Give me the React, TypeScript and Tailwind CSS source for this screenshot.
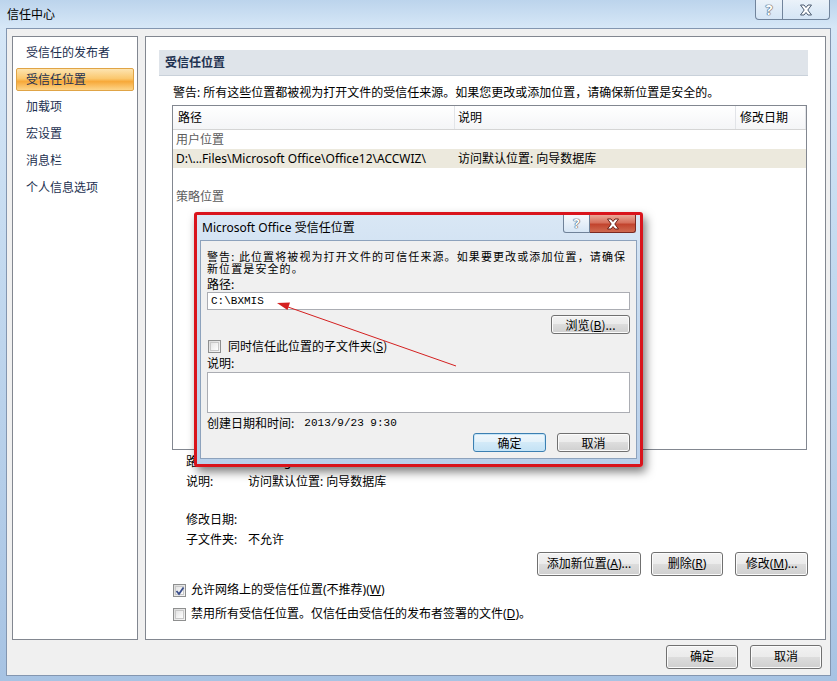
import React from 'react';

const Btn = ({
  children,
  w,
  h = 'h-[24px]',
  focused = false,
}: {
  children: React.ReactNode;
  w: string;
  h?: string;
  focused?: boolean;
}) => (
  <button
    className={`${w} ${h} flex items-center justify-center rounded-[3px] border text-[12px] leading-none text-black ${
      focused
        ? 'border-[#3c7fb1] shadow-[inset_0_0_0_1px_#c5e5f8] bg-[linear-gradient(180deg,#f0f7fc_0%,#e3f1fa_50%,#d3eaf8_50%,#c4e2f5_100%)]'
        : 'border-[#707070] shadow-[inset_0_0_0_1px_#fbfbfb] bg-[linear-gradient(180deg,#f2f2f2_0%,#ebebeb_50%,#dddddd_50%,#cfcfcf_100%)]'
    }`}
  >
    {children}
  </button>
);

const Check = ({ checked = false }: { checked?: boolean }) => (
  <span className="relative flex h-[13px] w-[13px] shrink-0 items-center justify-center border border-[#8e8f8f] bg-[linear-gradient(135deg,#dcdcdc,#f6f6f6)]">
    <span className="h-[9px] w-[9px] border border-[#c8c8c8] bg-[linear-gradient(135deg,#e4e4e4,#ffffff)]" />
    {checked && (
      <svg className="absolute left-[1px] top-[1px]" width="10" height="10" viewBox="0 0 10 10">
        <path d="M1.5 5 L4 8 L8.5 1.5" fill="none" stroke="#3b4f8c" strokeWidth="1.8" />
      </svg>
    )}
  </span>
);

const CaptionX = ({ color = '#ffffff', stroke = '#4a5a70' }: { color?: string; stroke?: string }) => (
  <svg width="14" height="12" viewBox="0 0 14 12">
    <path
      d="M1.5 1 L5 1 L7 3.5 L9 1 L12.5 1 L8.8 6 L12.5 11 L9 11 L7 8.5 L5 11 L1.5 11 L5.2 6 Z"
      fill={color}
      stroke={stroke}
      strokeWidth="1"
      strokeLinejoin="round"
    />
  </svg>
);

const navItems = ['受信任的发布者', '受信任位置', '加载项', '宏设置', '消息栏', '个人信息选项'];

export default function App() {
  return (
    <div className="relative h-[681px] w-[837px] overflow-hidden bg-[linear-gradient(180deg,#bcd4ec_0%,#d6e7f7_4%,#c3d9ef_40%,#a7c3e3_100%)] font-['Noto_Sans','Noto_Sans_CJK_SC',sans-serif] text-[12px] text-black">
      {/* Title bar */}
      <div className="flex h-[28px] items-start">
        <span className="ml-[7px] mt-[6px] leading-[18px]">信任中心</span>
        <div className="ml-auto mr-[7px] flex">
          <div className="flex h-[20px] w-[28px] items-center justify-center rounded-bl-[4px] border border-t-0 border-[#71849c] bg-[linear-gradient(180deg,rgba(255,255,255,0.7),rgba(220,234,248,0.5))] text-[14px] font-bold leading-none text-white [text-shadow:0_0_1px_#3b4a60,0_0_1px_#3b4a60,0_0_1px_#3b4a60]">
            ?
          </div>
          <div className="flex h-[20px] w-[47px] items-center justify-center rounded-br-[4px] border border-l-0 border-t-0 border-[#71849c] bg-[linear-gradient(180deg,rgba(255,255,255,0.7),rgba(220,234,248,0.5))]">
            <CaptionX />
          </div>
        </div>
      </div>

      {/* Client area */}
      <div className="ml-[6px] h-[648px] w-[825px] border border-[#8396b0] bg-[#f0f0f0] pl-[5px] pr-[4px] pt-[7px]">
        <div className="flex h-[604px] gap-[7px]">
          {/* Left nav */}
          <div className="flex w-[126px] flex-col gap-[4px] border border-[#828790] bg-white px-[3px] pt-[4px]">
            {navItems.map((item) => (
              <div
                key={item}
                className={`flex h-[23px] items-center pl-[9px] text-[#1c3050] ${
                  item === '受信任位置'
                    ? 'rounded-[2px] border border-[#e0a446] bg-[linear-gradient(180deg,#fde4b0_0%,#fbc86e_45%,#f7a93a_60%,#fdd58a_100%)]'
                    : 'border border-transparent'
                }`}
              >
                {item}
              </div>
            ))}
          </div>

          {/* Right panel */}
          <div className="w-[681px] border border-[#828790] bg-white pl-[13px] pt-[13px]">
            <div className="flex h-[26px] w-[649px] items-center border-b border-[#c9d1da] bg-[#dfe4ea] pl-[6px] font-bold text-[#1e3150]">
              受信任位置
            </div>
            <div className="ml-[14px] mt-[10px] leading-[14px]">
              警告: 所有这些位置都被视为打开文件的受信任来源。如果您更改或添加位置，请确保新位置是安全的。
            </div>

            {/* List */}
            <div className="ml-[13px] mt-[5px] h-[345px] w-[635px] border border-[#828790] bg-white">
              <div className="flex h-[24px] border-b border-[#d5d5d5] bg-[linear-gradient(180deg,#ffffff,#f4f5f7)]">
                <div className="flex w-[282px] items-center border-r border-[#e2e4e8] pl-[5px]">路径</div>
                <div className="flex w-[281px] items-center border-r border-[#e2e4e8] pl-[3px]">说明</div>
                <div className="flex w-[70px] items-center border-r border-[#e2e4e8] pl-[4px]">修改日期</div>
              </div>
              <div className="flex h-[19px] items-center pl-[3px] text-[#5c5c5c]">用户位置</div>
              <div className="flex h-[19px] items-center bg-[#ece9dd]">
                <div className="w-[282px] pl-[3px]">D:\...Files\Microsoft Office\Office12\ACCWIZ\</div>
                <div className="pl-[3px]">访问默认位置: 向导数据库</div>
              </div>
              <div className="mt-[19px] flex h-[19px] items-center pl-[3px] text-[#5c5c5c]">策略位置</div>
            </div>

            {/* Details */}
            <div className="ml-[27px] mt-[2px]">
              <div className="flex h-[20px] items-center">
                <span className="w-[62px]">路径:</span>
                <span>D:\Program Files\Microsoft Office\Office12\ACCWIZ\</span>
              </div>
              <div className="flex h-[20px] items-center">
                <span className="w-[62px]">说明:</span>
                <span>访问默认位置: 向导数据库</span>
              </div>
              <div className="mt-[18px] flex h-[20px] items-center">
                <span className="w-[62px]">修改日期:</span>
              </div>
              <div className="flex h-[20px] items-center">
                <span className="w-[62px]">子文件夹:</span>
                <span>不允许</span>
              </div>
            </div>

            <div className="mt-[2px] flex w-[649px] justify-end">
              <Btn w="w-[104px]">
                添加新位置(<u>A</u>)...
              </Btn>
              <div className="ml-[10px]">
                <Btn w="w-[72px]">
                  删除(<u>R</u>)
                </Btn>
              </div>
              <div className="ml-[12px]">
                <Btn w="w-[73px]">
                  修改(<u>M</u>)...
                </Btn>
              </div>
            </div>

            <div className="ml-[14px] mt-[2px] flex h-[24px] items-center gap-[5px]">
              <Check checked />
              <span>
                允许网络上的受信任位置(不推荐)(<u>W</u>)
              </span>
            </div>
            <div className="ml-[14px] flex h-[24px] items-center gap-[5px]">
              <Check />
              <span>
                禁用所有受信任位置。仅信任由受信任的发布者签署的文件(<u>D</u>)。
              </span>
            </div>
          </div>
        </div>

        {/* Bottom buttons */}
        <div className="mr-[4px] mt-[5px] flex justify-end gap-[12px]">
          <Btn w="w-[72px]">确定</Btn>
          <Btn w="w-[72px]">取消</Btn>
        </div>
      </div>

      {/* Modal dialog */}
      <div className="absolute left-[194px] top-[212px] h-[255px] w-[449px] rounded-[3px] border-[3px] border-[#d9141c] bg-[linear-gradient(180deg,#d9e7f5_0%,#c6daef_40%,#b9d0ea_100%)] px-[3px] shadow-[3px_5px_10px_rgba(0,0,0,0.5)]">
        <div className="flex h-[25px] items-start">
          <span className="ml-[2px] mt-[5px] leading-[16px]">Microsoft Office 受信任位置</span>
          <div className="ml-auto mr-[1px] flex">
            <div className="flex h-[18px] w-[27px] items-center justify-center rounded-bl-[3px] border border-t-0 border-[#6f8299] bg-[linear-gradient(180deg,rgba(255,255,255,0.75),rgba(214,230,246,0.6))] text-[13px] font-bold leading-none text-white [text-shadow:0_0_1px_#3b4a60,0_0_1px_#3b4a60,0_0_1px_#3b4a60]">
              ?
            </div>
            <div className="flex h-[18px] w-[46px] items-center justify-center rounded-br-[3px] border border-l-0 border-t-0 border-[#7a2a22] bg-[linear-gradient(180deg,#e9a898_0%,#d6705c_45%,#c2442e_55%,#cf6a50_100%)]">
              <CaptionX stroke="#6b1e14" />
            </div>
          </div>
        </div>
        <div className="h-[219px] w-[437px] border border-[#8da2bc] bg-[#f0f0f0] pl-[6px] pr-[6px] pt-[9px] font-['Noto_Sans_CJK_SC',sans-serif] text-[12px]">
          <div className="h-[12px] whitespace-nowrap text-[11px] leading-[12px] tracking-[1.1px]">
            警告: 此位置将被视为打开文件的可信任来源。如果要更改或添加位置，请确保
          </div>
          <div className="h-[12px] whitespace-nowrap text-[11px] leading-[12px] tracking-[1.1px]">
            新位置是安全的。
          </div>
          <div className="mt-[4px] leading-[12px]">路径:</div>
          <div className="mt-[2px] flex h-[18px] w-[423px] items-center border border-[#abadb3] bg-white pl-[3px] font-['Liberation_Mono',monospace] text-[11px]">
            C:\BXMIS
          </div>
          <div className="mt-[5px] flex justify-end">
            <Btn w="w-[79px]" h="h-[19px]">
              浏览(<u>B</u>)...
            </Btn>
          </div>
          <div className="mt-[3px] flex h-[18px] items-center gap-[7px] pl-[1px]">
            <Check />
            <span>
              同时信任此位置的子文件夹(<u>S</u>)
            </span>
          </div>
          <div className="mt-[2px] leading-[12px]">说明:</div>
          <div className="mt-[3px] h-[41px] w-[423px] border border-[#abadb3] bg-white" />
          <div className="mt-[4px] flex leading-[12px]">
            <span>创建日期和时间:</span>
            <span className="ml-[10px] font-['Liberation_Mono',monospace] text-[11px]">2013/9/23 9:30</span>
          </div>
          <div className="mt-[4px] flex justify-end gap-[11px]">
            <Btn w="w-[73px]" h="h-[19px]" focused>
              确定
            </Btn>
            <Btn w="w-[73px]" h="h-[19px]">
              取消
            </Btn>
          </div>
        </div>
      </div>

      {/* Red annotation arrow */}
      <svg className="pointer-events-none absolute left-0 top-0" width="837" height="681">
        <line x1="456" y1="366" x2="288" y2="307" stroke="#d42020" strokeWidth="1" />
        <polygon points="277,303 290,302.5 287.5,310" fill="#d42020" />
      </svg>
    </div>
  );
}
